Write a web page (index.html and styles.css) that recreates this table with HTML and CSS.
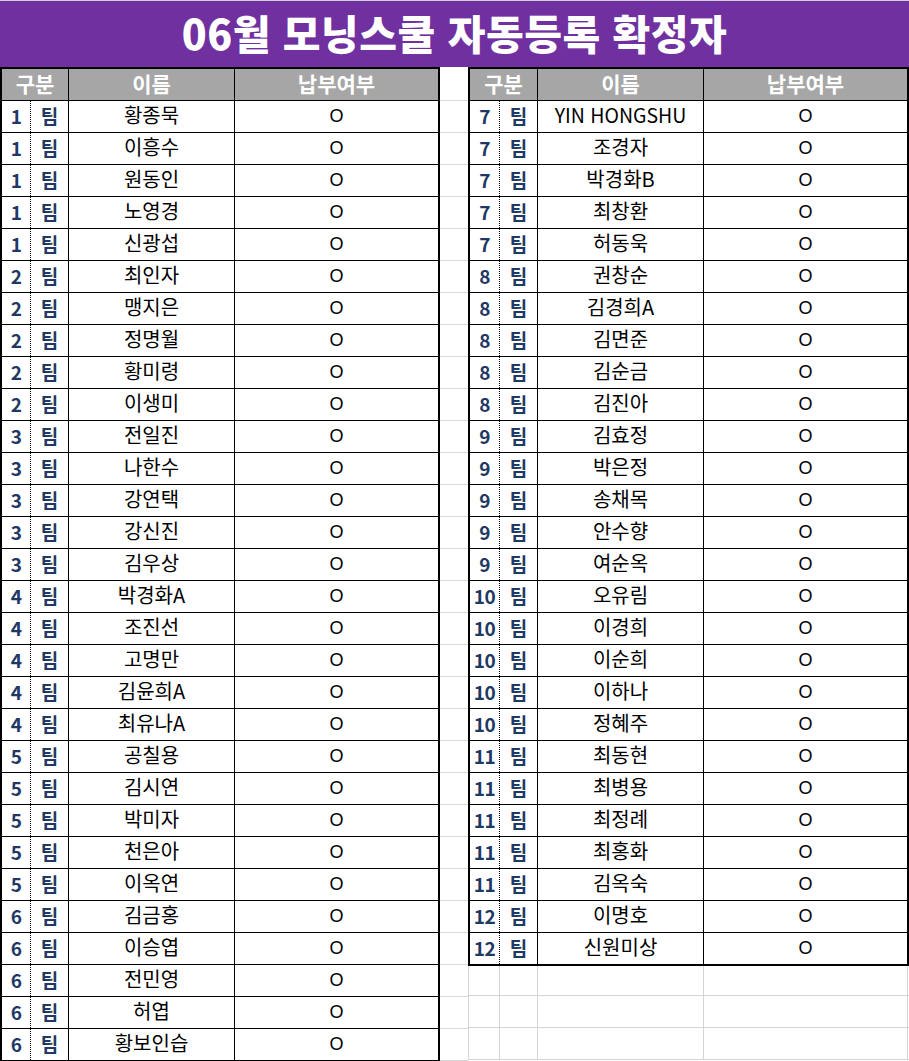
FILE: index.html
```html
<!DOCTYPE html>
<html lang="ko">
<head>
<meta charset="utf-8">
<title>06월 모닝스쿨 자동등록 확정자</title>
<link rel="stylesheet" href="styles.css">
</head>
<body>
<div class="page">
  <header class="banner">06월 모닝스쿨 자동등록 확정자</header>
  <main class="sheet">
    <section class="roster left">
      <div class="row head"><div class="c group">구분</div><div class="c name">이름</div><div class="c paid">납부여부</div></div>
      <div class="row"><div class="c num">1</div><div class="c team">팀</div><div class="c name">황종묵</div><div class="c paid">O</div></div>
      <div class="row"><div class="c num">1</div><div class="c team">팀</div><div class="c name">이흥수</div><div class="c paid">O</div></div>
      <div class="row"><div class="c num">1</div><div class="c team">팀</div><div class="c name">원동인</div><div class="c paid">O</div></div>
      <div class="row"><div class="c num">1</div><div class="c team">팀</div><div class="c name">노영경</div><div class="c paid">O</div></div>
      <div class="row"><div class="c num">1</div><div class="c team">팀</div><div class="c name">신광섭</div><div class="c paid">O</div></div>
      <div class="row"><div class="c num">2</div><div class="c team">팀</div><div class="c name">최인자</div><div class="c paid">O</div></div>
      <div class="row"><div class="c num">2</div><div class="c team">팀</div><div class="c name">맹지은</div><div class="c paid">O</div></div>
      <div class="row"><div class="c num">2</div><div class="c team">팀</div><div class="c name">정명월</div><div class="c paid">O</div></div>
      <div class="row"><div class="c num">2</div><div class="c team">팀</div><div class="c name">황미령</div><div class="c paid">O</div></div>
      <div class="row"><div class="c num">2</div><div class="c team">팀</div><div class="c name">이생미</div><div class="c paid">O</div></div>
      <div class="row"><div class="c num">3</div><div class="c team">팀</div><div class="c name">전일진</div><div class="c paid">O</div></div>
      <div class="row"><div class="c num">3</div><div class="c team">팀</div><div class="c name">나한수</div><div class="c paid">O</div></div>
      <div class="row"><div class="c num">3</div><div class="c team">팀</div><div class="c name">강연택</div><div class="c paid">O</div></div>
      <div class="row"><div class="c num">3</div><div class="c team">팀</div><div class="c name">강신진</div><div class="c paid">O</div></div>
      <div class="row"><div class="c num">3</div><div class="c team">팀</div><div class="c name">김우상</div><div class="c paid">O</div></div>
      <div class="row"><div class="c num">4</div><div class="c team">팀</div><div class="c name">박경화A</div><div class="c paid">O</div></div>
      <div class="row"><div class="c num">4</div><div class="c team">팀</div><div class="c name">조진선</div><div class="c paid">O</div></div>
      <div class="row"><div class="c num">4</div><div class="c team">팀</div><div class="c name">고명만</div><div class="c paid">O</div></div>
      <div class="row"><div class="c num">4</div><div class="c team">팀</div><div class="c name">김윤희A</div><div class="c paid">O</div></div>
      <div class="row"><div class="c num">4</div><div class="c team">팀</div><div class="c name">최유나A</div><div class="c paid">O</div></div>
      <div class="row"><div class="c num">5</div><div class="c team">팀</div><div class="c name">공칠용</div><div class="c paid">O</div></div>
      <div class="row"><div class="c num">5</div><div class="c team">팀</div><div class="c name">김시연</div><div class="c paid">O</div></div>
      <div class="row"><div class="c num">5</div><div class="c team">팀</div><div class="c name">박미자</div><div class="c paid">O</div></div>
      <div class="row"><div class="c num">5</div><div class="c team">팀</div><div class="c name">천은아</div><div class="c paid">O</div></div>
      <div class="row"><div class="c num">5</div><div class="c team">팀</div><div class="c name">이옥연</div><div class="c paid">O</div></div>
      <div class="row"><div class="c num">6</div><div class="c team">팀</div><div class="c name">김금홍</div><div class="c paid">O</div></div>
      <div class="row"><div class="c num">6</div><div class="c team">팀</div><div class="c name">이승엽</div><div class="c paid">O</div></div>
      <div class="row"><div class="c num">6</div><div class="c team">팀</div><div class="c name">전민영</div><div class="c paid">O</div></div>
      <div class="row"><div class="c num">6</div><div class="c team">팀</div><div class="c name">허엽</div><div class="c paid">O</div></div>
      <div class="row"><div class="c num">6</div><div class="c team">팀</div><div class="c name">황보인습</div><div class="c paid">O</div></div>
    </section>
    <div class="gap"></div>
    <div class="right-col">
      <section class="roster right">
        <div class="row head"><div class="c group">구분</div><div class="c name">이름</div><div class="c paid">납부여부</div></div>
        <div class="row"><div class="c num">7</div><div class="c team">팀</div><div class="c name latin">YIN HONGSHU</div><div class="c paid">O</div></div>
        <div class="row"><div class="c num">7</div><div class="c team">팀</div><div class="c name">조경자</div><div class="c paid">O</div></div>
        <div class="row"><div class="c num">7</div><div class="c team">팀</div><div class="c name">박경화B</div><div class="c paid">O</div></div>
        <div class="row"><div class="c num">7</div><div class="c team">팀</div><div class="c name">최창환</div><div class="c paid">O</div></div>
        <div class="row"><div class="c num">7</div><div class="c team">팀</div><div class="c name">허동욱</div><div class="c paid">O</div></div>
        <div class="row"><div class="c num">8</div><div class="c team">팀</div><div class="c name">권창순</div><div class="c paid">O</div></div>
        <div class="row"><div class="c num">8</div><div class="c team">팀</div><div class="c name">김경희A</div><div class="c paid">O</div></div>
        <div class="row"><div class="c num">8</div><div class="c team">팀</div><div class="c name">김면준</div><div class="c paid">O</div></div>
        <div class="row"><div class="c num">8</div><div class="c team">팀</div><div class="c name">김순금</div><div class="c paid">O</div></div>
        <div class="row"><div class="c num">8</div><div class="c team">팀</div><div class="c name">김진아</div><div class="c paid">O</div></div>
        <div class="row"><div class="c num">9</div><div class="c team">팀</div><div class="c name">김효정</div><div class="c paid">O</div></div>
        <div class="row"><div class="c num">9</div><div class="c team">팀</div><div class="c name">박은정</div><div class="c paid">O</div></div>
        <div class="row"><div class="c num">9</div><div class="c team">팀</div><div class="c name">송채목</div><div class="c paid">O</div></div>
        <div class="row"><div class="c num">9</div><div class="c team">팀</div><div class="c name">안수향</div><div class="c paid">O</div></div>
        <div class="row"><div class="c num">9</div><div class="c team">팀</div><div class="c name">여순옥</div><div class="c paid">O</div></div>
        <div class="row"><div class="c num">10</div><div class="c team">팀</div><div class="c name">오유림</div><div class="c paid">O</div></div>
        <div class="row"><div class="c num">10</div><div class="c team">팀</div><div class="c name">이경희</div><div class="c paid">O</div></div>
        <div class="row"><div class="c num">10</div><div class="c team">팀</div><div class="c name">이순희</div><div class="c paid">O</div></div>
        <div class="row"><div class="c num">10</div><div class="c team">팀</div><div class="c name">이하나</div><div class="c paid">O</div></div>
        <div class="row"><div class="c num">10</div><div class="c team">팀</div><div class="c name">정혜주</div><div class="c paid">O</div></div>
        <div class="row"><div class="c num">11</div><div class="c team">팀</div><div class="c name">최동현</div><div class="c paid">O</div></div>
        <div class="row"><div class="c num">11</div><div class="c team">팀</div><div class="c name">최병용</div><div class="c paid">O</div></div>
        <div class="row"><div class="c num">11</div><div class="c team">팀</div><div class="c name">최정례</div><div class="c paid">O</div></div>
        <div class="row"><div class="c num">11</div><div class="c team">팀</div><div class="c name">최홍화</div><div class="c paid">O</div></div>
        <div class="row"><div class="c num">11</div><div class="c team">팀</div><div class="c name">김옥숙</div><div class="c paid">O</div></div>
        <div class="row"><div class="c num">12</div><div class="c team">팀</div><div class="c name">이명호</div><div class="c paid">O</div></div>
        <div class="row"><div class="c num">12</div><div class="c team">팀</div><div class="c name">신원미상</div><div class="c paid">O</div></div>
      </section>
      <div class="blank">
        <div class="brow"><div class="b"></div><div class="b"></div><div class="b"></div><div class="b"></div></div>
        <div class="brow"><div class="b"></div><div class="b"></div><div class="b"></div><div class="b"></div></div>
        <div class="brow"><div class="b"></div><div class="b"></div><div class="b"></div><div class="b"></div></div>
      </div>
    </div>
  </main>
</div>
</body>
</html>
```

FILE: styles.css
```css
html, body {
  margin: 0;
  padding: 0;
  background: #ffffff;
}

body {
  width: 909px;
  height: 1061px;
  overflow: hidden;
  font-family: "Noto Sans CJK KR", "Noto Sans", sans-serif;
  color: #000000;
}

.page {
  border-top: 1px solid #d0d0d0;
}

.banner {
  height: 66px;
  background: #7030a0;
  color: #ffffff;
  display: flex;
  align-items: center;
  justify-content: center;
  font-size: 41px;
  font-weight: 900;
  line-height: 1;
  letter-spacing: 0.5px;
  padding-bottom: 4px;
  box-sizing: border-box;
}

.sheet {
  display: flex;
  align-items: flex-start;
}

.roster {
  border: 2px solid #000000;
  box-sizing: border-box;
  background: #ffffff;
}

.left {
  width: 440px;
}

.gap {
  width: 28px;
  align-self: stretch;
  margin-top: 33px;
  background: repeating-linear-gradient(to bottom, #d9d9d9 0 1px, transparent 1px 32px);
}

.right-col {
  width: 441px;
  display: flex;
  flex-direction: column;
}

.right {
  width: 441px;
}

.row {
  display: grid;
  height: 32px;
  border-bottom: 1px solid #000000;
  box-sizing: border-box;
}

.row:last-child {
  border-bottom: none;
  height: 31px;
}

.left .row {
  grid-template-columns: 29px 38px 166px 1fr;
}

.right .row {
  grid-template-columns: 30px 38px 166px 1fr;
}

.c {
  display: flex;
  align-items: center;
  justify-content: center;
  box-sizing: border-box;
  font-size: 18px;
  line-height: 1;
  white-space: nowrap;
  padding-bottom: 3px;
}

.num {
  border-right: 1px dotted #000000;
  font-size: 19px;
  font-weight: 700;
  color: #1f3864;
  letter-spacing: -0.5px;
}

.team {
  border-right: 1px solid #000000;
  font-size: 19px;
  font-weight: 700;
  color: #1f3864;
}

.name {
  border-right: 1px solid #000000;
  font-size: 20px;
  font-weight: 400;
}

.name.latin {
  font-size: 19.5px;
}

.paid {
  font-family: "Liberation Sans", Arial, sans-serif;
  font-size: 18px;
  font-weight: 400;
  padding-bottom: 1px;
}

.head {
  background: #a6a6a6;
}

.head .c {
  font-family: "Noto Sans CJK KR", sans-serif;
  color: #ffffff;
  font-size: 21px;
  font-weight: 700;
  padding-bottom: 3px;
}

.head .group {
  grid-column: span 2;
  border-right: 1px solid #000000;
}

.blank {
  width: 441px;
}

.brow {
  display: grid;
  grid-template-columns: 32px 38px 166px 204px;
  height: 32px;
  box-sizing: border-box;
  border-bottom: 1px solid #d4d4d4;
}

.brow:first-child {
  height: 30px;
}

.b {
  border-right: 1px solid #d4d4d4;
}

.b:first-child {
  border-left: 1px solid #d4d4d4;
}
```
